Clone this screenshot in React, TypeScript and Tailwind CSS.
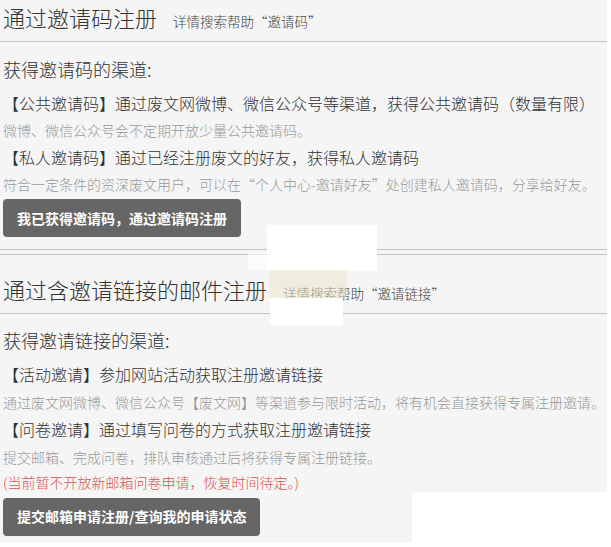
import React from 'react';

const font = { fontFamily: '"Noto Sans CJK SC", "Noto Sans", sans-serif' };

const Title = ({ text, hint }: { text: string; hint: string }) => (
    <div className="flex items-baseline gap-4 px-[3px] pb-[9px] border-b border-[#c4c4c4]">
        <h2 className="text-[22px] leading-[30px] font-light text-[#333]">{text}</h2>
        <span className="text-[13.5px] font-light text-[#444]">{hint}</span>
    </div>
);

const Body = ({ children }: { children: React.ReactNode }) => (
    <p className="text-[16px] leading-[24px] font-light text-[#333] whitespace-nowrap">{children}</p>
);

const Note = ({ children, red }: { children: React.ReactNode; red?: boolean }) => (
    <p className={`text-[14px] leading-[20px] font-light whitespace-nowrap ${red ? 'text-[#d9534f]' : 'text-[#999]'}`}>
        {children}
    </p>
);

const Button = ({ children }: { children: React.ReactNode }) => (
    <button className="self-start h-[38px] px-[14px] rounded bg-[#666] text-white text-[14px] font-bold">
        {children}
    </button>
);

const App = () => {
    return (
        <div className="relative w-[611px] h-[547px] overflow-hidden bg-white" style={font}>
            <div className="w-[607px] bg-[#f5f5f5] pb-[20px]">
                {/* 邀请码注册 */}
                <section className="pt-[2px] pb-[12px] border-b border-[#c4c4c4]">
                    <Title text="通过邀请码注册" hint="详情搜索帮助“邀请码”" />
                    <div className="flex flex-col gap-[5px] px-[3px] pt-[14px]">
                        <h3 className="text-[18px] leading-[26px] font-light text-[#333] mb-[4px]">获得邀请码的渠道:</h3>
                        <Body>【公共邀请码】通过废文网微博、微信公众号等渠道，获得公共邀请码（数量有限）</Body>
                        <Note>微博、微信公众号会不定期开放少量公共邀请码。</Note>
                        <Body>【私人邀请码】通过已经注册废文的好友，获得私人邀请码</Body>
                        <Note>符合一定条件的资深废文用户，可以在“个人中心-邀请好友”处创建私人邀请码，分享给好友。</Note>
                        <Button>我已获得邀请码，通过邀请码注册</Button>
                    </div>
                </section>

                {/* 邮件注册 */}
                <section className="mt-[4px] pt-[19px] border-t border-[#c4c4c4]">
                    <Title text="通过含邀请链接的邮件注册" hint="详情搜索帮助“邀请链接”" />
                    <div className="flex flex-col gap-[5.5px] px-[3px] pt-[13px]">
                        <h3 className="text-[18px] leading-[26px] font-light text-[#333] mb-[3.5px]">获得邀请链接的渠道:</h3>
                        <Body>【活动邀请】参加网站活动获取注册邀请链接</Body>
                        <Note>通过废文网微博、微信公众号【废文网】等渠道参与限时活动，将有机会直接获得专属注册邀请。</Note>
                        <Body>【问卷邀请】通过填写问卷的方式获取注册邀请链接</Body>
                        <Note>提交邮箱、完成问卷，排队审核通过后将获得专属注册链接。</Note>
                        <Note red>(当前暂不开放新邮箱问卷申请，恢复时间待定。)</Note>
                        <Button>提交邮箱申请注册/查询我的申请状态</Button>
                    </div>
                </section>
            </div>

            {/* 截图遮挡块 */}
            <div className="absolute left-[267px] top-[225px] w-[110px] h-[46px] bg-white" />
            <div className="absolute left-[248px] top-[252px] w-[20px] h-[18px] bg-white/60" />
            <div className="absolute left-[270px] top-[270px] w-[76px] h-[28px] bg-[#ece5c8]/50" />
            <div className="absolute left-[270px] top-[298px] w-[73px] h-[27px] bg-white" />
            <div className="absolute left-[412px] top-[492px] right-0 bottom-0 bg-white" />
            <div className="absolute left-0 top-[542px] right-0 bottom-0 bg-white" />
        </div>
    );
};

export default App;
